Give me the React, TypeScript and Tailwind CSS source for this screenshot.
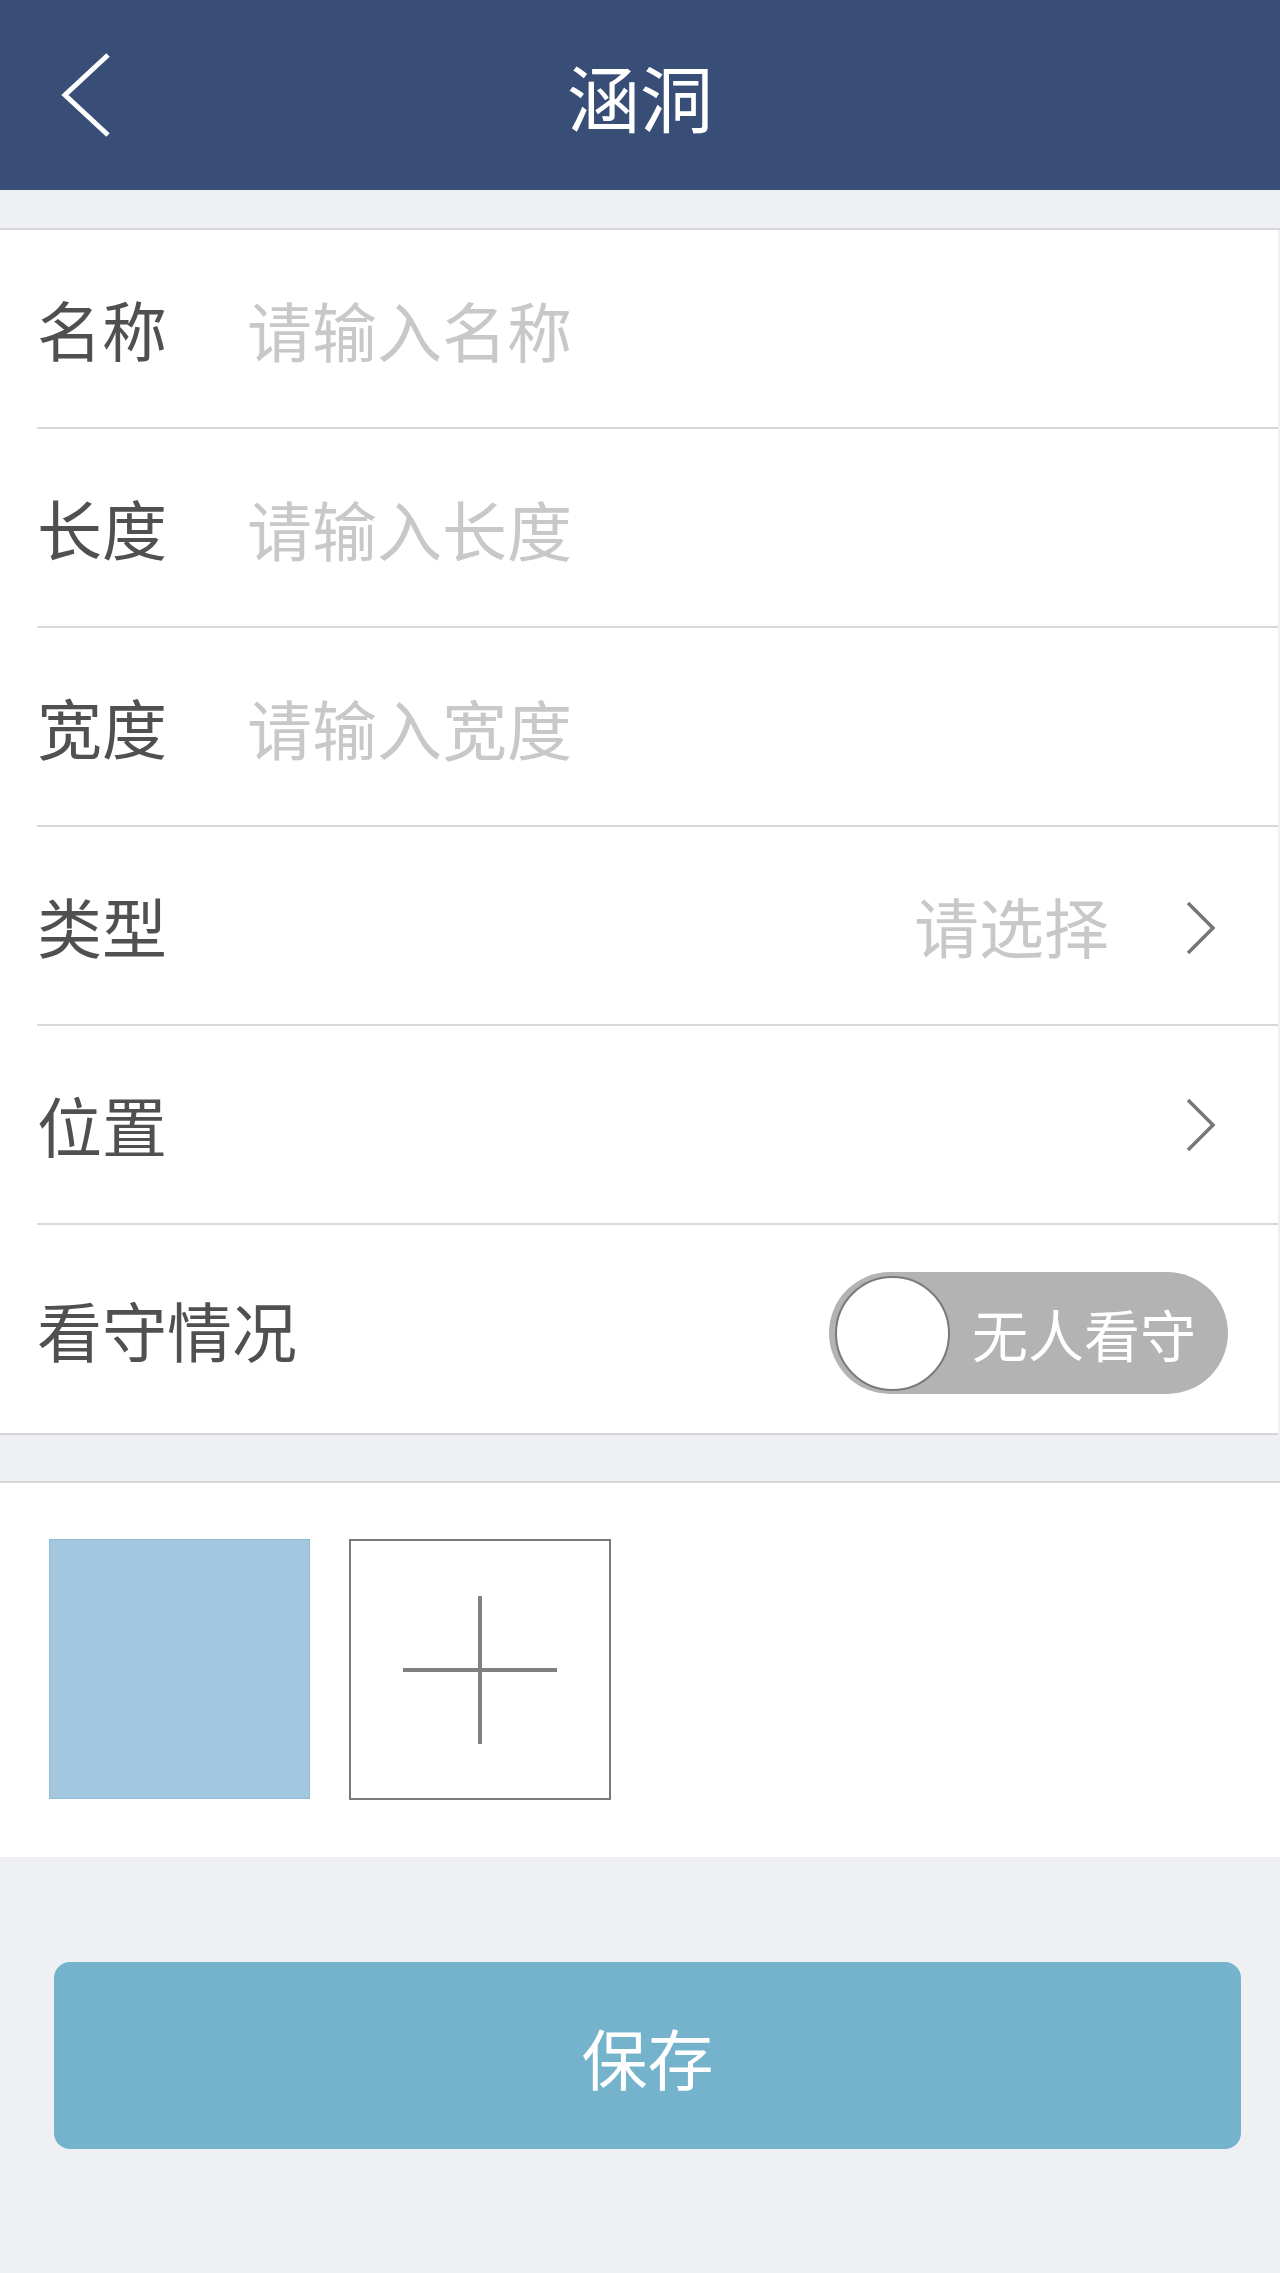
import React from 'react';

const FONT = "font-['Noto_Sans_CJK_SC','Noto_Sans',sans-serif]";

type Row = { label: string; placeholder?: string; kind: 'input' | 'select' | 'nav' };

const ROWS: Row[] = [
  { label: '名称', placeholder: '请输入名称', kind: 'input' },
  { label: '长度', placeholder: '请输入长度', kind: 'input' },
  { label: '宽度', placeholder: '请输入宽度', kind: 'input' },
  { label: '类型', placeholder: '请选择', kind: 'select' },
  { label: '位置', kind: 'nav' },
];

// 右侧箭头
const Chevron = ({ className = '' }: { className?: string }) => (
  <svg width="32" height="56" viewBox="0 0 32 56" className={`shrink-0 ${className}`}>
    <path d="M3 3 L28 28 L3 53" fill="none" stroke="#777777" strokeWidth="3.5" />
  </svg>
);

const App: React.FC = () => {
  return (
    <div className={`min-h-screen w-full bg-[#eff0f4] ${FONT}`}>
      {/* 顶部导航 */}
      <header className="h-[190px] bg-[#384e76] grid grid-cols-[200px_1fr_200px] items-center">
        <button className="pl-[61px] flex items-center">
          <svg width="50" height="86" viewBox="0 0 50 86">
            <path d="M47 3 L4 43 L47 83" fill="none" stroke="#ffffff" strokeWidth="5" />
          </svg>
        </button>
        <h1 className="text-center text-white text-[73px] leading-none font-normal">涵洞</h1>
        <div />
      </header>

      <div className="h-[40px] border-b-2 border-[#d6d6d6]" />

      {/* 表单 */}
      <section className="bg-white mr-[2px] border-b-2 border-[#d6d6d6]">
        {ROWS.map((r) => (
          <div key={r.label} className="pl-[37px]">
            <div className="h-[199px] border-b-2 border-[#d9d9d9] flex items-center pr-[61px]">
              <span className="w-[210px] shrink-0 text-[65px] leading-none text-[#505050]">{r.label}</span>
              {r.kind === 'input' && (
                <input
                  placeholder={r.placeholder}
                  className="flex-1 min-w-0 bg-transparent outline-none text-[65px] leading-none text-[#505050] placeholder:text-[#c8c8c8]"
                />
              )}
              {r.kind === 'select' && (
                <>
                  <span className="flex-1" />
                  <span className="text-[65px] leading-none text-[#c8c8c8] mr-[76px]">{r.placeholder}</span>
                  <Chevron className="mt-[5px]" />
                </>
              )}
              {r.kind === 'nav' && (
                <>
                  <span className="flex-1" />
                  <Chevron />
                </>
              )}
            </div>
          </div>
        ))}
        <div className="pl-[37px] pr-[50px] h-[208px] flex items-center">
          <span className="flex-1 text-[65px] leading-none text-[#505050]">看守情况</span>
          <div className="mt-[8px] w-[399px] h-[122px] rounded-full bg-[#b3b3b3] flex items-center pl-[6px]">
            <div className="w-[115px] h-[115px] rounded-full bg-white border-2 border-[#7a7a7a]" />
            <span className="ml-[22px] text-white text-[56px] leading-none">无人看守</span>
          </div>
        </div>
      </section>

      <div className="h-[48px] border-b-2 border-[#d6d6d6]" />

      {/* 图片 */}
      <section className="bg-white h-[374px] flex items-start gap-[39px] pl-[49px] pt-[56px]">
        <div className="w-[261px] h-[260px] bg-[#a3c7df] border border-[#93bcd8]" />
        <button className="w-[262px] h-[261px] border-2 border-[#7a7a7a] flex items-center justify-center">
          <svg width="154" height="148" viewBox="0 0 154 148">
            <path d="M0 74 H154 M77 0 V148" stroke="#808080" strokeWidth="4" />
          </svg>
        </button>
      </section>

      {/* 保存 */}
      <div className="pt-[105px] pb-[126px] pl-[54px] pr-[39px]">
        <button className="w-full h-[187px] rounded-[16px] bg-[#75b2cc] text-white text-[66px] leading-none">
          保存
        </button>
      </div>
    </div>
  );
};

export default App;
